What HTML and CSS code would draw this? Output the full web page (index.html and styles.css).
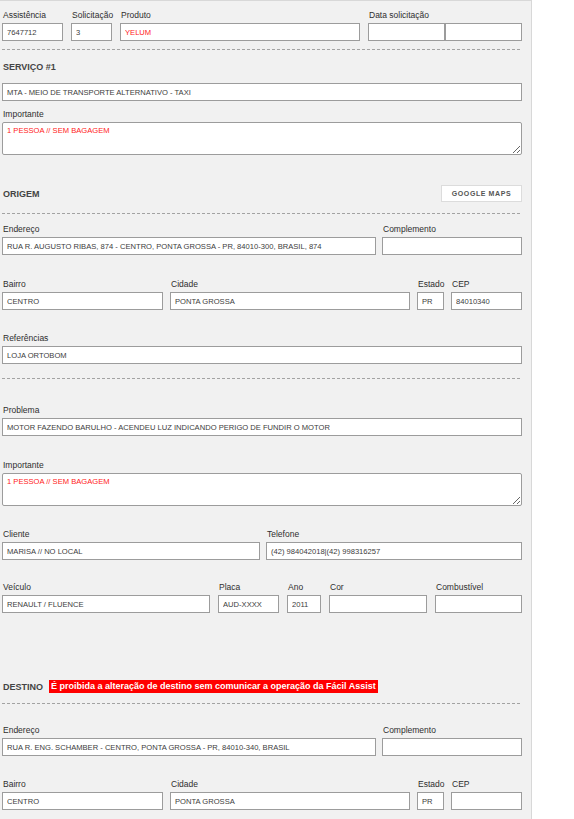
FILE: index.html
```html
<!doctype html>
<html lang="pt-BR">
<head>
    <meta charset="UTF-8">
    <meta content="width=device-width, initial-scale=1" name="viewport">
    <title>Serviço</title>
    <link rel="stylesheet" href="styles.css">
</head>
<body>
<div class="panel">
    <div class="row row-top first">
        <div class="field"><label>Assistência</label><input type="text" value="7647712"></div>
        <div class="field"><label>Solicitação</label><input type="text" value="3"></div>
        <div class="field"><label>Produto</label><input type="text" class="alert" value="YELUM"></div>
        <div class="field">
            <label>Data solicitação</label>
            <div class="pair"><input type="text"><input type="text"></div>
        </div>
    </div>
    <div class="dash"></div>

    <h3 class="section-title">SERVIÇO #1</h3>
    <input type="text" class="service" value="MTA - MEIO DE TRANSPORTE ALTERNATIVO - TAXI">
    <div class="field note">
        <label>Importante</label>
        <textarea class="alert">1 PESSOA // SEM BAGAGEM</textarea>
    </div>

    <div class="section-head origin-head">
        <h3>ORIGEM</h3>
        <button class="maps-btn" type="button">GOOGLE MAPS</button>
    </div>
    <div class="dash head-dash"></div>

    <div class="row row-address after-dash">
        <div class="field"><label>Endereço</label><input type="text" value="RUA R. AUGUSTO RIBAS, 874 - CENTRO, PONTA GROSSA - PR, 84010-300, BRASIL, 874"></div>
        <div class="field"><label>Complemento</label><input type="text"></div>
    </div>
    <div class="row row-district loose">
        <div class="field"><label>Bairro</label><input type="text" value="CENTRO"></div>
        <div class="field"><label>Cidade</label><input type="text" value="PONTA GROSSA"></div>
        <div class="field"><label>Estado</label><input type="text" value="PR"></div>
        <div class="field"><label>CEP</label><input type="text" value="84010340"></div>
    </div>
    <div class="row row-full">
        <div class="field"><label>Referências</label><input type="text" value="LOJA ORTOBOM"></div>
    </div>
    <div class="dash mid-dash"></div>

    <div class="row row-full gap-lg">
        <div class="field"><label>Problema</label><input type="text" value="MOTOR FAZENDO BARULHO - ACENDEU LUZ INDICANDO PERIGO DE FUNDIR O MOTOR"></div>
    </div>
    <div class="row row-full loose">
        <div class="field"><label>Importante</label><textarea class="alert">1 PESSOA // SEM BAGAGEM</textarea></div>
    </div>
    <div class="row row-contact">
        <div class="field"><label>Cliente</label><input type="text" value="MARISA // NO LOCAL"></div>
        <div class="field"><label>Telefone</label><input type="text" value="(42) 984042018|(42) 998316257"></div>
    </div>
    <div class="row row-vehicle tight">
        <div class="field"><label>Veículo</label><input type="text" value="RENAULT / FLUENCE"></div>
        <div class="field"><label>Placa</label><input type="text" value="AUD-XXXX"></div>
        <div class="field"><label>Ano</label><input type="text" value="2011"></div>
        <div class="field"><label>Cor</label><input type="text"></div>
        <div class="field"><label>Combustível</label><input type="text"></div>
    </div>

    <div class="section-head dest-head">
        <h3>DESTINO</h3>
        <span class="warning">É proibida a alteração de destino sem comunicar a operação da Fácil Assist</span>
    </div>
    <div class="dash head-dash dest-dash"></div>

    <div class="row row-address gap-md">
        <div class="field"><label>Endereço</label><input type="text" value="RUA R. ENG. SCHAMBER - CENTRO, PONTA GROSSA - PR, 84010-340, BRASIL"></div>
        <div class="field"><label>Complemento</label><input type="text"></div>
    </div>
    <div class="row row-district">
        <div class="field"><label>Bairro</label><input type="text" value="CENTRO"></div>
        <div class="field"><label>Cidade</label><input type="text" value="PONTA GROSSA"></div>
        <div class="field"><label>Estado</label><input type="text" value="PR"></div>
        <div class="field"><label>CEP</label><input type="text"></div>
    </div>
</div>
</body>
</html>
```

FILE: styles.css
```css
body {
    margin: 0;
    background: #fff;
    font-family: "Liberation Sans", Arial, sans-serif;
}

.panel {
    width: 520px;
    padding: 9px 9px 30px 2px;
    background: #f1f1f1;
    border-top: 1px solid #d8d8d8;
    border-right: 1px solid #d8d8d8;
}

.field label {
    display: block;
    margin-bottom: 2px;
    padding-left: 1px;
    font-size: 8.5px;
    line-height: 11px;
    color: #2e2e2e;
    white-space: nowrap;
}

input,
textarea {
    display: block;
    width: 100%;
    box-sizing: border-box;
    margin: 0;
    border: 1px solid #9c9c9c;
    background: #fff;
    font-family: inherit;
    font-size: 7.6px;
    color: #3c3c3c;
    outline: none;
}

input {
    height: 18px;
    padding: 0 4px;
}

textarea {
    height: 33px;
    padding: 3px 4px;
    border-radius: 2px;
}

.alert {
    color: #f22;
}

.row {
    display: grid;
    column-gap: 8px;
    margin-top: 23px;
}

.row.first {
    margin-top: 0;
}

.row.after-dash {
    margin-top: 10px;
}

.row.loose {
    margin-top: 24px;
}

.row.tight {
    margin-top: 22px;
}

.row.gap-lg {
    margin-top: 26px;
}

.row.gap-md {
    margin-top: 21px;
}

.row-top {
    grid-template-columns: 61px 41px 240px 154px;
}

.row-address {
    grid-template-columns: 374px 140px;
    column-gap: 6px;
}

.row-district {
    grid-template-columns: 161px 240px 27px 71px;
    column-gap: 7px;
}

.row-full {
    grid-template-columns: 1fr;
}

.row-contact {
    grid-template-columns: 258px 256px;
    column-gap: 6px;
}

.row-vehicle {
    grid-template-columns: 208px 61px 34px 98px 87px;
}

.pair {
    display: grid;
    grid-template-columns: 1fr 1fr;
}

.dash {
    height: 1px;
    margin-top: 8px;
    background: repeating-linear-gradient(to right, #a3a3a3 0 3px, transparent 3px 5px);
}

.dash.head-dash {
    margin-top: 11px;
}

.dash.mid-dash {
    margin-top: 14px;
}

.dash.dest-dash {
    margin-top: 10px;
}

h3 {
    margin: 0;
    padding-left: 1px;
    font-size: 9px;
    font-weight: bold;
    color: #444;
}

.section-title {
    margin-top: 11px;
    line-height: 12px;
}

.service {
    margin-top: 10px;
}

.note {
    margin-top: 8px;
}

.section-head {
    display: flex;
    align-items: center;
}

.origin-head {
    justify-content: space-between;
    height: 17px;
    margin-top: 30px;
}

.dest-head {
    gap: 6px;
    height: 13px;
    margin-top: 67px;
}

.maps-btn {
    width: 81px;
    height: 17px;
    padding: 0;
    border: 1px solid #dcdcdc;
    background: #fff;
    font-family: inherit;
    font-size: 7px;
    font-weight: bold;
    letter-spacing: 0.6px;
    color: #555;
    cursor: pointer;
}

.warning {
    padding: 0 2px;
    background: #f00;
    color: #fff;
    font-size: 9px;
    font-weight: bold;
    line-height: 13px;
    white-space: nowrap;
}
```
